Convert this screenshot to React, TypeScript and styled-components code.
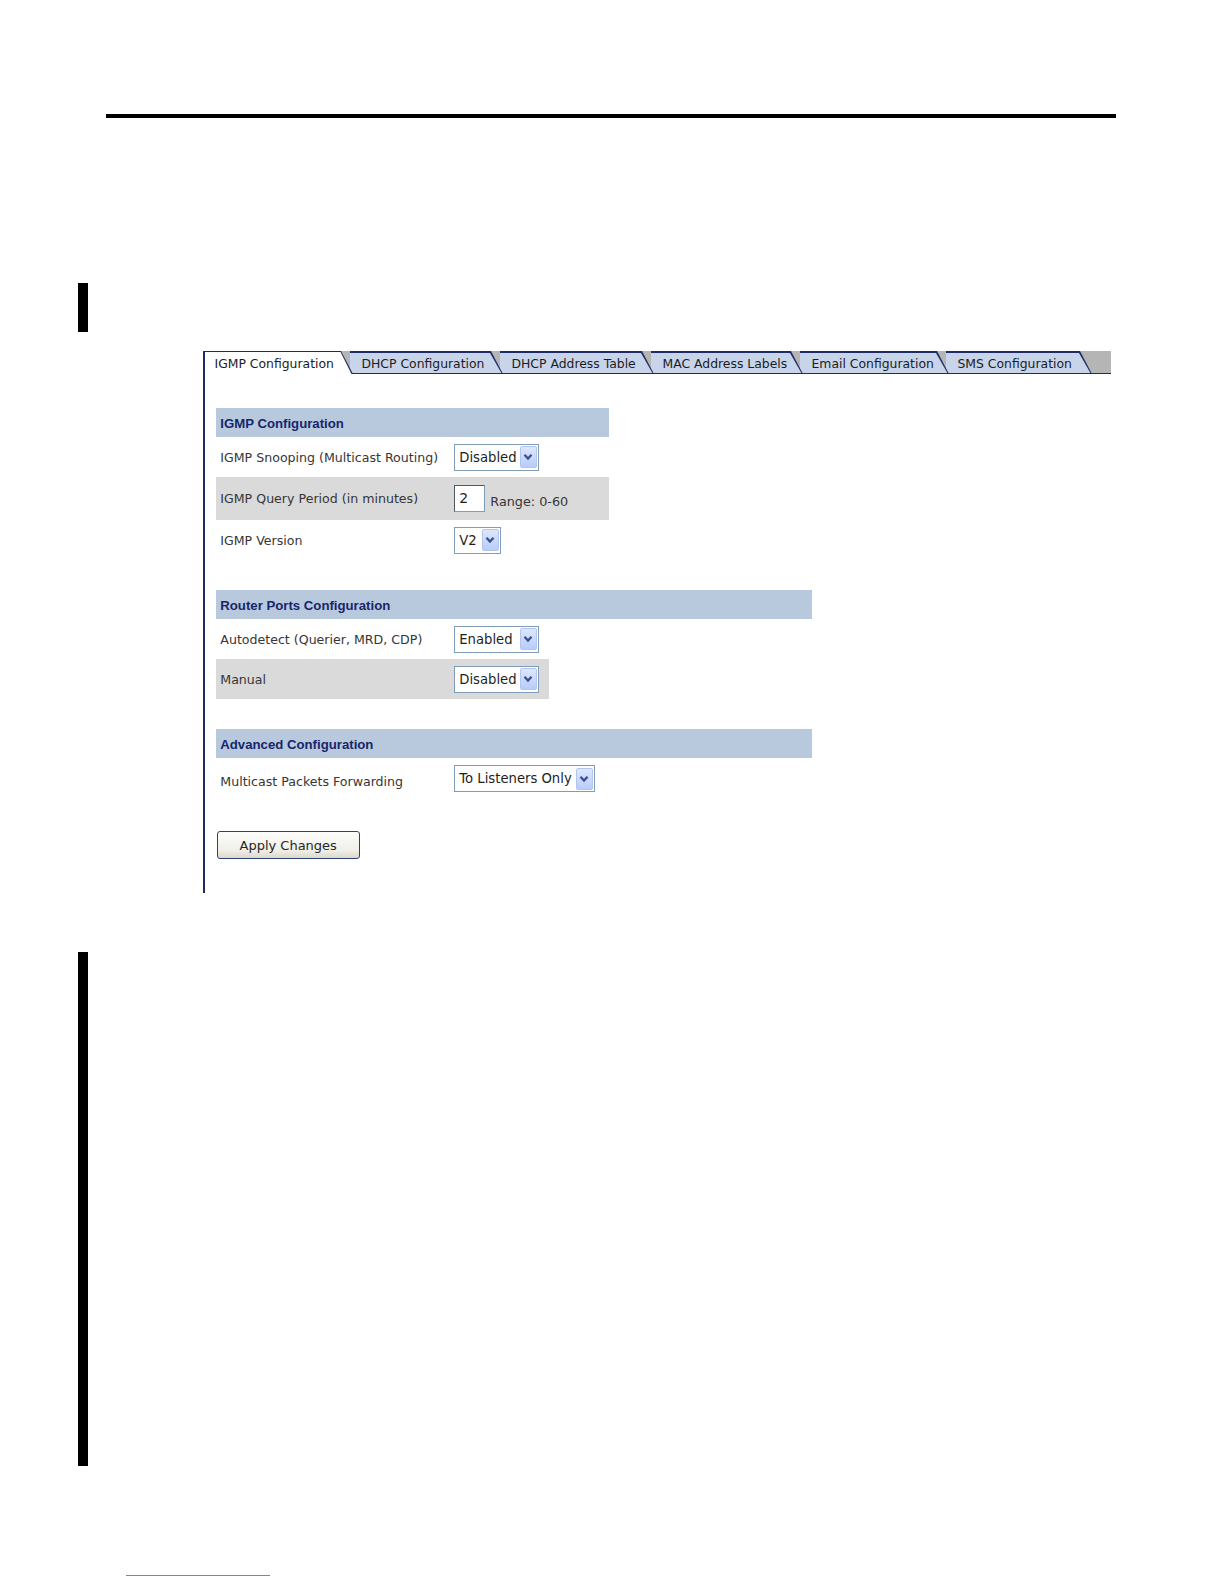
import { createGlobalStyle, styled } from "styled-components";

const GlobalStyle = createGlobalStyle`
  html, body {
    margin: 0;
    padding: 0;
    background: #ffffff;
  }
  body {
    font-family: "DejaVu Sans", Verdana, sans-serif;
    color: #333;
  }
`;

const Page = styled.div`
  width: 1224px;
  height: 1584px;
  padding-top: 114px;
  box-sizing: border-box;
  overflow: hidden;
`;

const TopRule = styled.div`
  margin-left: 106px;
  width: 1010px;
  height: 4px;
  background: #000;
`;

const Body = styled.div`
  display: flex;
  align-items: flex-start;
`;

const Gutter = styled.div`
  width: 88px;
  padding-left: 78px;
  box-sizing: border-box;
  display: flex;
  flex-direction: column;
`;

const ChangeBar = styled.div<{ $top: number; $height: number }>`
  width: 10px;
  margin-top: ${(p) => p.$top}px;
  height: ${(p) => p.$height}px;
  background: #000;
`;

const FooterLine = styled.div`
  margin-top: 109px;
  margin-left: 126px;
  width: 144px;
  height: 1px;
  background: #7384cc;
`;

const Panel = styled.div`
  margin-left: 115px;
  margin-top: 233px;
  width: 908px;
  display: flex;
  flex-direction: column;
`;

const TabStrip = styled.div`
  display: flex;
  height: 23px;
  background: #b5b5b5;
  box-shadow: inset 0 -1px 0 #1e2c63;
`;

const Tab = styled.div<{ $w: number; $active?: boolean; $z: number }>`
  position: relative;
  flex: none;
  width: ${(p) => p.$w}px;
  height: 23px;
  margin-left: ${(p) => (p.$active ? 0 : -3)}px;
  z-index: ${(p) => p.$z};
  font-size: 12.4px;
  line-height: 26px;
  color: #1c1c1c;
  padding-left: 11.5px;
  box-sizing: border-box;
  white-space: nowrap;

  &::before {
    content: "";
    position: absolute;
    inset: 0;
    background: #1e2c63;
    clip-path: polygon(0 0, calc(100% - 12px) 0, 100% 100%, 0 100%);
  }
  &::after {
    content: "";
    position: absolute;
    inset: 0;
    background: ${(p) => (p.$active ? "#ffffff" : "#c8d4ea")};
    clip-path: ${(p) =>
      p.$active
        ? "polygon(2px 1px, calc(100% - 12.5px) 1px, calc(100% - 1.5px) 100%, 2px 100%)"
        : "polygon(0 2px, calc(100% - 13px) 2px, calc(100% - 1.6px) calc(100% - 1px), 0 calc(100% - 1px))"};
  }
  span {
    position: relative;
    z-index: 1;
  }
`;

const PanelBody = styled.div`
  border-left: 2px solid #1d2b5f;
  padding: 34px 0 34px 10.7px;
  display: flex;
  flex-direction: column;
`;

const Section = styled.div<{ $gap: number; $width: number }>`
  margin-top: ${(p) => p.$gap}px;
  width: ${(p) => p.$width}px;
  display: flex;
  flex-direction: column;
`;

const SectionHeader = styled.div`
  height: 29px;
  background: #b8c9de;
  display: flex;
  align-items: center;
  padding-left: 4.6px;
  padding-top: 1px;
  box-sizing: border-box;
  font-family: "Liberation Sans", Arial, sans-serif;
  font-weight: bold;
  font-size: 13.2px;
  color: #17266b;
`;

const Row = styled.div<{ $h: number; $shade?: boolean; $width?: number }>`
  height: ${(p) => p.$h}px;
  width: ${(p) => (p.$width ? `${p.$width}px` : "100%")};
  background: ${(p) => (p.$shade ? "#dadada" : "transparent")};
  display: grid;
  grid-template-columns: 238.6px auto;
  align-items: center;
`;

const Label = styled.div<{ $drop?: number }>`
  padding-left: 4.6px;
  padding-top: ${(p) => p.$drop ?? 0}px;
  font-size: 12.6px;
  color: #363636;
  white-space: nowrap;
`;

const Control = styled.div`
  display: flex;
  align-items: center;
  gap: 5px;
`;

const SelectBox = styled.div<{ $w: number }>`
  width: ${(p) => p.$w}px;
  height: 27px;
  box-sizing: border-box;
  border: 1px solid #7f9db9;
  background: #fff;
  display: flex;
  align-items: center;
`;

const SelectValue = styled.div`
  flex: 1;
  padding-left: 4px;
  font-size: 13.2px;
  color: #1e1e1e;
  white-space: nowrap;
`;

const ArrowButton = styled.div`
  width: 17px;
  height: 22px;
  margin-right: 1.5px;
  box-sizing: border-box;
  border: 1px solid #b3c5ee;
  border-radius: 2px;
  background: linear-gradient(#dde7fd, #b9ccf9);
  display: flex;
  align-items: center;
  justify-content: center;
`;

const TextInput = styled.div`
  width: 31px;
  height: 27px;
  box-sizing: border-box;
  border: 1px solid #7f9db9;
  border-top-color: #4d5866;
  border-left-color: #4d5866;
  background: #fff;
  padding-left: 4px;
  font-size: 14px;
  line-height: 24px;
  color: #1e1e1e;
`;

const Hint = styled.span`
  font-size: 12.8px;
  color: #363636;
  padding-top: 6px;
`;

const ApplyButton = styled.button`
  margin-top: 32px;
  margin-left: 1px;
  width: 143px;
  height: 28px;
  border: 1px solid #2c4275;
  border-radius: 3px;
  background: linear-gradient(#fdfdfb, #f0efe8 70%, #dcd8cc);
  font-family: "DejaVu Sans", Verdana, sans-serif;
  font-size: 13px;
  color: #262626;
  padding: 0;
  cursor: pointer;
`;

const Chevron = () => (
  <svg width="10" height="8" viewBox="0 0 10 8">
    <path d="M1.5 1.8 L5 5.6 L8.5 1.8" fill="none" stroke="#3a5090" strokeWidth="2.3" />
  </svg>
);

const Select = ({ value, width }: { value: string; width: number }) => (
  <SelectBox $w={width}>
    <SelectValue>{value}</SelectValue>
    <ArrowButton>
      <Chevron />
    </ArrowButton>
  </SelectBox>
);

const tabs = [
  { label: "IGMP Configuration", w: 150 },
  { label: "DHCP Configuration", w: 153 },
  { label: "DHCP Address Table", w: 154 },
  { label: "MAC Address Labels", w: 152 },
  { label: "Email Configuration", w: 149 },
  { label: "SMS Configuration", w: 146 },
];

export default function App() {
  return (
    <Page>
      <GlobalStyle />
      <TopRule />
      <Body>
        <Gutter>
          <ChangeBar $top={165} $height={49} />
          <ChangeBar $top={620} $height={514} />
        </Gutter>
        <Panel>
          <TabStrip>
            {tabs.map((t, i) => (
              <Tab key={t.label} $w={t.w} $active={i === 0} $z={20 - i}>
                <span>{t.label}</span>
              </Tab>
            ))}
          </TabStrip>
          <PanelBody>
            <Section $gap={0} $width={393}>
              <SectionHeader>IGMP Configuration</SectionHeader>
              <Row $h={40}>
                <Label>IGMP Snooping (Multicast Routing)</Label>
                <Control>
                  <Select value="Disabled" width={85} />
                </Control>
              </Row>
              <Row $h={43} $shade>
                <Label>IGMP Query Period (in minutes)</Label>
                <Control>
                  <TextInput>2</TextInput>
                  <Hint>Range: 0-60</Hint>
                </Control>
              </Row>
              <Row $h={40}>
                <Label>IGMP Version</Label>
                <Control>
                  <Select value="V2" width={47} />
                </Control>
              </Row>
            </Section>

            <Section $gap={30} $width={596}>
              <SectionHeader>Router Ports Configuration</SectionHeader>
              <Row $h={40}>
                <Label>Autodetect (Querier, MRD, CDP)</Label>
                <Control>
                  <Select value="Enabled" width={85} />
                </Control>
              </Row>
              <Row $h={40} $shade $width={333}>
                <Label>Manual</Label>
                <Control>
                  <Select value="Disabled" width={85} />
                </Control>
              </Row>
            </Section>

            <Section $gap={30} $width={596}>
              <SectionHeader>Advanced Configuration</SectionHeader>
              <Row $h={41}>
                <Label $drop={6}>Multicast Packets Forwarding</Label>
                <Control>
                  <Select value="To Listeners Only" width={141} />
                </Control>
              </Row>
            </Section>

            <div>
              <ApplyButton type="button">Apply Changes</ApplyButton>
            </div>
          </PanelBody>
        </Panel>
      </Body>
      <FooterLine />
    </Page>
  );
}
